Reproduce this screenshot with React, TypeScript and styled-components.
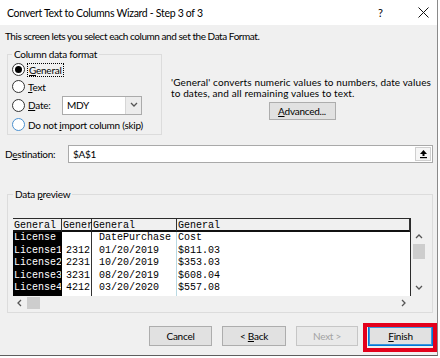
import React from "react";
import styled, { createGlobalStyle } from "styled-components";

const GlobalStyle = createGlobalStyle`
  html, body {
    margin: 0;
    padding: 0;
    background: #fff;
  }
  body {
    font-family: Lato, "Noto Sans", sans-serif;
    font-size: 10px;
    letter-spacing: -0.25px;
    color: #000;
  }
`;

const Dialog = styled.div`
  width: 438px;
  height: 356px;
  box-sizing: border-box;
  background: #f0f0f0;
  border-right: 1px solid #8a8a8a;
  border-bottom: 1px solid #5f5f5f;
  display: flex;
  flex-direction: column;
`;

const TitleBar = styled.div`
  height: 25px;
  flex: none;
  background: #fff;
  display: flex;
  align-items: center;
  padding-left: 7px;
  font-size: 10.5px;
  letter-spacing: -0.3px;
`;

const TitleControls = styled.div`
  margin-left: auto;
  display: flex;
  align-items: center;
  height: 100%;
`;

const HelpGlyph = styled.span`
  width: 40px;
  text-align: left;
  font-size: 11px;
`;

const CloseBox = styled.span`
  width: 19px;
  display: flex;
  align-items: center;
`;

const Body = styled.div`
  flex: 1;
  display: flex;
  flex-direction: column;
  padding: 0 4px 0 5px;
`;

const Intro = styled.div`
  margin-top: 5px;
  line-height: 13px;
  white-space: nowrap;
  letter-spacing: -0.45px;
`;

const TopRow = styled.div`
  display: flex;
  align-items: flex-start;
  margin-top: 5px;
`;

const GroupBox = styled.fieldset<{ $w: number }>`
  margin: 0 0 0 2px;
  padding: 0 0 0 4px;
  width: ${(p) => p.$w}px;
  box-sizing: border-box;
  min-width: 0;
  border: 1px solid #dcdcdc;
`;

const Legend = styled.legend`
  padding: 0 2px;
  margin-left: 0;
  line-height: 13px;
`;

const RadioRow = styled.div<{ $h: number }>`
  display: flex;
  align-items: center;
  height: ${(p) => p.$h}px;
  white-space: nowrap;
`;

const RadioCircle = styled.span<{ $checked?: boolean; $accent?: boolean }>`
  width: 13px;
  height: 13px;
  box-sizing: border-box;
  border-radius: 50%;
  border: 1px solid ${(p) => (p.$accent ? "#4a90d0" : "#333")};
  background: #fff;
  display: flex;
  align-items: center;
  justify-content: center;
  margin-right: 3px;
  flex: none;

  &::after {
    content: "";
    display: ${(p) => (p.$checked ? "block" : "none")};
    width: 7px;
    height: 7px;
    border-radius: 50%;
    background: #000;
  }
`;

const FocusLabel = styled.span`
  outline: 1px dotted #000;
  padding: 0 1px;
  line-height: 12px;
`;

const FixedLabel = styled.span<{ $w: number }>`
  width: ${(p) => p.$w}px;
  flex: none;
`;

const Combo = styled.div`
  width: 80px;
  height: 19px;
  box-sizing: border-box;
  border: 1px solid #ababab;
  background: #fff;
  display: flex;
`;

const ComboText = styled.span`
  flex: 1;
  padding-left: 4px;
  line-height: 17px;
`;

const ComboButton = styled.span`
  width: 15px;
  border-left: 1px solid #d6d6d6;
  background: #ececec;
  display: flex;
  align-items: center;
  justify-content: center;
`;

const InfoColumn = styled.div`
  flex: 1;
  margin-left: 9px;
  margin-top: 29px;
  display: flex;
  flex-direction: column;
`;

const InfoText = styled.div`
  line-height: 11px;
  white-space: nowrap;
  letter-spacing: 0.12px;
`;

const PushButton = styled.button<{ $w: number; $disabled?: boolean; $default?: boolean }>`
  position: relative;
  width: ${(p) => p.$w}px;
  height: 20px;
  box-sizing: border-box;
  padding: 0;
  font: inherit;
  letter-spacing: inherit;
  color: ${(p) => (p.$disabled ? "#a3a3a3" : "#000")};
  background: ${(p) => (p.$disabled ? "#e9e9e9" : "#e1e1e1")};
  border: 1px solid ${(p) => (p.$disabled ? "#c6c6c6" : p.$default ? "#0078d7" : "#adadad")};
  box-shadow: ${(p) => (p.$default ? "inset 0 0 0 1px #3c95dc" : "none")};
`;

const AdvancedButton = styled(PushButton)`
  align-self: center;
  margin-top: 3px;
  height: 18px;
`;

const DestRow = styled.div`
  display: flex;
  align-items: center;
  margin-top: 10px;
`;

const DestInput = styled.div`
  width: 365px;
  height: 18px;
  box-sizing: border-box;
  border: 1px solid #a9a9a9;
  background: #fff;
  display: flex;
  align-items: center;
`;

const DestText = styled.span`
  flex: 1;
  padding-left: 4px;
`;

const CollapseButton = styled.span`
  width: 16px;
  height: 14px;
  margin-right: 1px;
  box-sizing: border-box;
  border: 1px solid #cfcfcf;
  background: #f6f6f6;
  display: flex;
  align-items: center;
  justify-content: center;
`;

const PreviewBox = styled(GroupBox)`
  margin-top: 25px;
  padding: 17px 0 3px 5px;
`;

const PreviewRow = styled.div`
  display: flex;
  align-items: flex-start;
`;

const PreviewGrid = styled.div`
  width: 398px;
  height: 78px;
  box-sizing: border-box;
  border-top: 1px solid #2b2b2b;
  border-right: 1px solid #2b2b2b;
  display: grid;
  grid-template-columns: 49px 30px 85px 1fr;
  overflow: hidden;
  font-family: "Liberation Mono", "DejaVu Sans Mono", monospace;
  font-size: 10px;
  letter-spacing: 0;
`;

const Column = styled.div<{ $selected?: boolean; $line?: string }>`
  display: flex;
  flex-direction: column;
  min-width: 0;
  background: ${(p) => (p.$selected ? "#000" : "#fff")};
  color: ${(p) => (p.$selected ? "#fff" : "#000")};
  border-right: 1px solid ${(p) => p.$line ?? "transparent"};
`;

const HeaderCell = styled.div`
  height: 11px;
  line-height: 13px;
  background: #f0f0f0;
  color: #000;
  border-bottom: 2px solid #111;
  white-space: pre;
  overflow: visible;
  margin-right: -1px;
  border-right: 1px solid #333;
  padding-left: 1px;
`;

const DataCell = styled.div<{ $right?: boolean }>`
  height: 12.5px;
  line-height: 12.5px;
  white-space: pre;
  overflow: hidden;
  text-align: ${(p) => (p.$right ? "right" : "left")};
  padding: 0 1px;
`;

const VScroll = styled.div`
  width: 12px;
  height: 65px;
  margin: 13px 0 0 2px;
  padding-bottom: 2px;
  box-sizing: border-box;
  display: flex;
  flex-direction: column;
  align-items: center;
`;

const ArrowCell = styled.span<{ $w?: number }>`
  width: ${(p) => p.$w ?? 12}px;
  height: 12px;
  flex: none;
  display: flex;
  align-items: center;
  justify-content: center;
`;

const VThumb = styled.span`
  width: 12px;
  height: 15px;
  margin-top: 1px;
  background: #cdcdcd;
`;

const Spacer = styled.span`
  flex: 1;
`;

const HScroll = styled.div`
  width: 398px;
  height: 12px;
  margin-top: 1px;
  display: flex;
  align-items: center;
`;

const HThumb = styled.span`
  width: 13px;
  height: 12px;
  background: #cdcdcd;
`;

const ButtonRow = styled.div`
  display: flex;
  justify-content: flex-end;
  gap: 10px;
  margin-top: 13px;
`;

const FinishButton = styled(PushButton)`
  &::after {
    content: "";
    position: absolute;
    top: -4px;
    bottom: -7px;
    left: -6px;
    right: -5px;
    border: 4px solid #e3001b;
    pointer-events: none;
  }
`;

const Chevron = ({ dir }: { dir: "up" | "down" | "left" | "right" }) => {
  const pts = {
    up: "1,5 4,2 7,5",
    down: "1,2 4,5 7,2",
    left: "5,1 2,4 5,7",
    right: "2,1 5,4 2,7",
  }[dir];
  return (
    <svg width="8" height="8" viewBox="0 0 8 8">
      <polyline points={pts} fill="none" stroke="#555" strokeWidth="1.3" />
    </svg>
  );
};

const rows = [
  ["License", "", " DatePurchase", "Cost"],
  ["License1", "2312", " 01/20/2019", "$811.03"],
  ["License2", "2231", " 10/20/2019", "$353.03"],
  ["License3", "3231", " 08/20/2019", "$608.04"],
  ["License4", "4212", " 03/20/2020", "$557.08"],
];

const columns = [
  { head: "General", selected: true, line: "#000", right: false },
  { head: "Gener", selected: false, line: "#333", right: true },
  { head: "General", selected: false, line: "#b9d9e3", right: false },
  { head: "General", selected: false, line: undefined, right: false },
];

export default function App() {
  return (
    <>
      <GlobalStyle />
      <Dialog>
        <TitleBar>
          Convert Text to Columns Wizard - Step 3 of 3
          <TitleControls>
            <HelpGlyph>?</HelpGlyph>
            <CloseBox>
              <svg width="11" height="11" viewBox="0 0 11 11">
                <path d="M0.5 0.5 L10.5 10.5 M10.5 0.5 L0.5 10.5" stroke="#111" strokeWidth="1" />
              </svg>
            </CloseBox>
          </TitleControls>
        </TitleBar>
        <Body>
          <Intro>This screen lets you select each column and set the Data Format.</Intro>
          <TopRow>
            <GroupBox $w={155}>
              <Legend>Column data format</Legend>
              <RadioRow $h={17}>
                <RadioCircle $checked />
                <FocusLabel>
                  <u>G</u>eneral
                </FocusLabel>
              </RadioRow>
              <RadioRow $h={17}>
                <RadioCircle />
                <span>
                  <u>T</u>ext
                </span>
              </RadioRow>
              <RadioRow $h={20}>
                <RadioCircle />
                <FixedLabel $w={34}>
                  <u>D</u>ate:
                </FixedLabel>
                <Combo>
                  <ComboText>MDY</ComboText>
                  <ComboButton>
                    <Chevron dir="down" />
                  </ComboButton>
                </Combo>
              </RadioRow>
              <RadioRow $h={19}>
                <RadioCircle $accent />
                <span>
                  Do not <u>i</u>mport column (skip)
                </span>
              </RadioRow>
            </GroupBox>
            <InfoColumn>
              <InfoText>'General' converts numeric values to numbers, date values</InfoText>
              <InfoText>to dates, and all remaining values to text.</InfoText>
              <AdvancedButton $w={67}>
                <u>A</u>dvanced...
              </AdvancedButton>
            </InfoColumn>
          </TopRow>
          <DestRow>
            <FixedLabel $w={63}>
              D<u>e</u>stination:
            </FixedLabel>
            <DestInput>
              <DestText>$A$1</DestText>
              <CollapseButton>
                <svg width="9" height="10" viewBox="0 0 9 10">
                  <path d="M4.5 1 L8 5 L5.5 5 L5.5 7 L3.5 7 L3.5 5 L1 5 Z" fill="#000" />
                  <rect x="1" y="8" width="7" height="1.2" fill="#000" />
                </svg>
              </CollapseButton>
            </DestInput>
          </DestRow>
          <PreviewBox $w={426}>
            <Legend>
              Data <u>p</u>review
            </Legend>
            <PreviewRow>
              <PreviewGrid>
                {columns.map((c, ci) => (
                  <Column key={ci} $selected={c.selected} $line={c.line}>
                    <HeaderCell>{c.head}</HeaderCell>
                    {rows.map((r, ri) => (
                      <DataCell key={ri} $right={c.right}>
                        {r[ci]}
                      </DataCell>
                    ))}
                  </Column>
                ))}
              </PreviewGrid>
              <VScroll>
                <ArrowCell>
                  <Chevron dir="up" />
                </ArrowCell>
                <VThumb />
                <Spacer />
                <ArrowCell>
                  <Chevron dir="down" />
                </ArrowCell>
              </VScroll>
            </PreviewRow>
            <HScroll>
              <ArrowCell $w={14}>
                <Chevron dir="left" />
              </ArrowCell>
              <HThumb />
              <Spacer />
              <ArrowCell $w={14}>
                <Chevron dir="right" />
              </ArrowCell>
            </HScroll>
          </PreviewBox>
          <ButtonRow>
            <PushButton $w={63}>Cancel</PushButton>
            <PushButton $w={64}>
              &lt; <u>B</u>ack
            </PushButton>
            <PushButton $w={62} $disabled>
              Next &gt;
            </PushButton>
            <FinishButton $w={65} $default>
              <u>F</u>inish
            </FinishButton>
          </ButtonRow>
        </Body>
      </Dialog>
    </>
  );
}
